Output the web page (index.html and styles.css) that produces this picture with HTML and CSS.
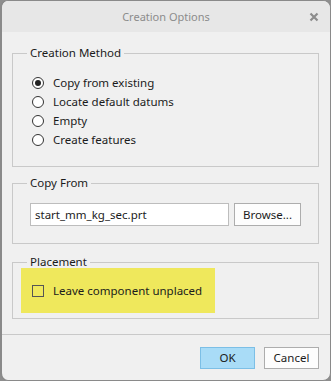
FILE: index.html
```html
<!DOCTYPE html>
<html lang="en">

<head>
    <meta charset="UTF-8">
    <meta name="viewport" content="width=device-width, initial-scale=1.0">
    <title>Creation Options</title>
    <link rel="stylesheet" href="styles.css">
</head>

<body>
    <div class="dialog">
        <div class="titlebar">
            <span></span>
            <span class="title">Creation Options</span>
            <span class="close">
                <svg width="10" height="10" viewBox="0 0 10 10">
                    <path d="M1.5 1.5 L8.5 8.5 M8.5 1.5 L1.5 8.5" stroke="#8c8c8c" stroke-width="2.2" fill="none"/>
                </svg>
            </span>
        </div>

        <div class="content">
            <fieldset class="group method">
                <legend>Creation Method</legend>
                <div class="group-body">
                    <label class="option"><input type="radio" name="method" checked> Copy from existing</label>
                    <label class="option"><input type="radio" name="method"> Locate default datums</label>
                    <label class="option"><input type="radio" name="method"> Empty</label>
                    <label class="option"><input type="radio" name="method"> Create features</label>
                </div>
            </fieldset>

            <fieldset class="group copy">
                <legend>Copy From</legend>
                <div class="group-body file-row">
                    <input type="text" class="file-input" value="start_mm_kg_sec.prt">
                    <button type="button" class="btn browse">Browse...</button>
                </div>
            </fieldset>

            <fieldset class="group placement">
                <legend>Placement</legend>
                <div class="group-body highlight">
                    <label class="option"><input type="checkbox"> Leave component unplaced</label>
                </div>
            </fieldset>
        </div>

        <div class="footer">
            <button type="button" class="btn primary">OK</button>
            <button type="button" class="btn">Cancel</button>
        </div>
    </div>
</body>

</html>
```

FILE: styles.css
```css
body {
    margin: 0;
    padding: 0;
    background-color: #8e8e8e;
    font-family: "Noto Sans", "Open Sans", sans-serif;
    font-size: 11.5px;
    color: #1b1b1b;
}

.dialog {
    width: 331px;
    height: 381px;
    box-sizing: border-box;
    border: 1px solid #8a8a8a;
    border-left-width: 2px;
    border-radius: 8px;
    background-color: #f0f0f0;
    display: flex;
    flex-direction: column;
    overflow: hidden;
}

.titlebar {
    height: 31px;
    background-color: #e7e7e7;
    display: grid;
    grid-template-columns: 1fr auto 1fr;
    align-items: center;
}

.title {
    color: #8c8c8c;
    font-size: 11px;
}

.close {
    justify-self: end;
    margin-right: 11px;
    display: flex;
}

.content {
    padding: 13px 11px 0 10px;
    display: flex;
    flex-direction: column;
}

.group {
    margin: 0;
    padding: 0;
    border: 1px solid #c9c9c9;
    min-width: 0;
    box-sizing: border-box;
}

.group legend {
    margin-left: 14px;
    padding: 0 3px;
    line-height: 16px;
}

.method {
    height: 122px;
}

.method .group-body {
    padding: 12px 0 0 19px;
    display: flex;
    flex-direction: column;
}

.copy {
    margin-top: 8px;
    height: 69px;
}

.copy .group-body {
    padding: 12px 0 0 17px;
}

.placement {
    margin-top: 10px;
    height: 65px;
}

.option {
    display: flex;
    align-items: center;
    height: 19px;
}

.option input {
    appearance: none;
    margin: 0 9px 0 0;
    width: 12px;
    height: 12px;
    box-sizing: border-box;
    border: 1px solid #333;
    background-color: #fff;
}

.option input[type="radio"] {
    border-radius: 50%;
    display: flex;
    align-items: center;
    justify-content: center;
}

.option input[type="radio"]:checked::after {
    content: "";
    width: 6px;
    height: 6px;
    border-radius: 50%;
    background-color: #222;
}

.option input[type="checkbox"] {
    border-color: #555;
    background-color: transparent;
}

.file-row {
    display: flex;
    gap: 5px;
}

.file-input {
    width: 199px;
    height: 23px;
    box-sizing: border-box;
    border: 1px solid #bdbdbd;
    background-color: #fff;
    padding: 0 4px;
    font-family: inherit;
    font-size: 11.5px;
    color: #1b1b1b;
}

.btn {
    height: 22px;
    box-sizing: border-box;
    border: 1px solid #adadad;
    background-color: #fdfdfd;
    font-family: inherit;
    font-size: 11.5px;
    color: #1b1b1b;
    padding: 0;
}

.browse {
    width: 67px;
    height: 23px;
}

.highlight {
    margin: -2px 0 0 8px;
    width: 194px;
    height: 45px;
    box-sizing: border-box;
    background-color: #efe85c;
    padding-left: 11px;
    display: flex;
    align-items: center;
}

.footer {
    margin-top: auto;
    height: 45px;
    border-top: 1px solid #c9c9c9;
    display: flex;
    justify-content: flex-end;
    align-items: center;
    gap: 9px;
    padding-right: 11px;
}

.footer .btn {
    width: 55px;
    height: 22px;
}

.btn.primary {
    background-color: #a9dcf7;
    border-color: #7cbfe6;
}
```
